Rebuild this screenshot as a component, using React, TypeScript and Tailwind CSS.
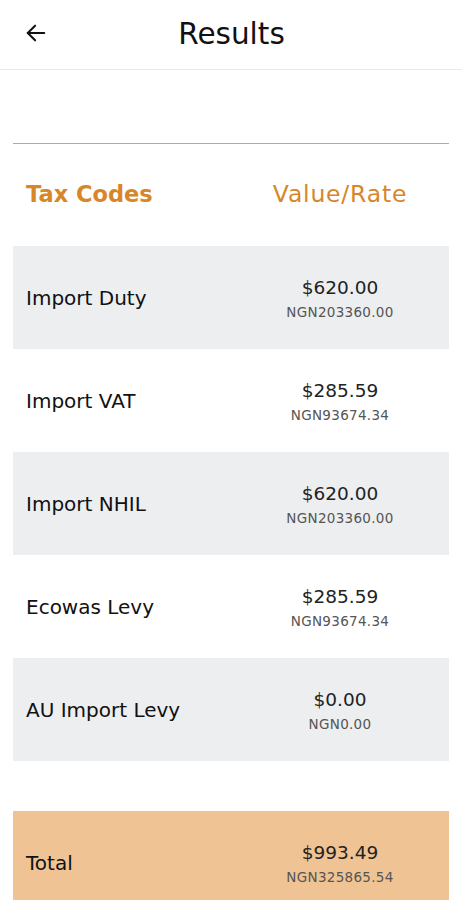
import React from 'react';

type Row = { code: string; usd: string; ngn: string };

const rows: Row[] = [
  { code: 'Import Duty', usd: '$620.00', ngn: 'NGN203360.00' },
  { code: 'Import VAT', usd: '$285.59', ngn: 'NGN93674.34' },
  { code: 'Import NHIL', usd: '$620.00', ngn: 'NGN203360.00' },
  { code: 'Ecowas Levy', usd: '$285.59', ngn: 'NGN93674.34' },
  { code: 'AU Import Levy', usd: '$0.00', ngn: 'NGN0.00' },
];

function BackArrow() {
  return (
    <svg width="22" height="22" viewBox="0 0 24 24" fill="none" stroke="#111" strokeWidth="2.2" strokeLinecap="round" strokeLinejoin="round">
      <path d="M21 12H3" />
      <path d="M11 4l-8 8 8 8" />
    </svg>
  );
}

function ValueCell({ usd, ngn }: { usd: string; ngn: string }) {
  return (
    <div className="flex flex-col items-center gap-[3px] pt-[2px]">
      <span className="text-[18.5px] leading-[24px] text-[#222]">{usd}</span>
      <span className="text-[13.5px] leading-[18px] tracking-[0.3px] text-[#555]">{ngn}</span>
    </div>
  );
}

export default function App() {
  return (
    <div className="min-h-[900px] bg-white" style={{ fontFamily: '"DejaVu Sans", "Open Sans", sans-serif' }}>
      <header className="h-[70px] flex items-center relative border-b border-[#ebebeb]">
        <button className="absolute left-[25px] top-[22px]">
          <BackArrow />
        </button>
        <h1 className="w-full text-center text-[29.5px] text-[#111] pl-[1px]">Results</h1>
      </header>

      <div className="mx-[13px] mt-[73px]">
        <div className="h-px bg-[#dca15a]" />
        <div className="grid grid-cols-2 items-center h-[102px]">
          <span className="pl-[13px] text-[22.5px] font-semibold text-[#d8862a]">Tax Codes</span>
          <span className="text-center text-[23.5px] tracking-[0.8px] text-[#d8862a]">Value/Rate</span>
        </div>

        {rows.map((r, i) => (
          <div key={r.code} className={`grid grid-cols-2 items-center h-[103px] ${i % 2 === 0 ? 'bg-[#eceef0]' : 'bg-white'}`}>
            <span className="pl-[13px] text-[20px] text-[#111]">{r.code}</span>
            <ValueCell usd={r.usd} ngn={r.ngn} />
          </div>
        ))}

        <div className="grid grid-cols-2 items-center h-[103px] mt-[50px] bg-[#efc393]">
          <span className="pl-[13px] text-[20px] text-[#111]">Total</span>
          <ValueCell usd="$993.49" ngn="NGN325865.54" />
        </div>
      </div>
    </div>
  );
}
